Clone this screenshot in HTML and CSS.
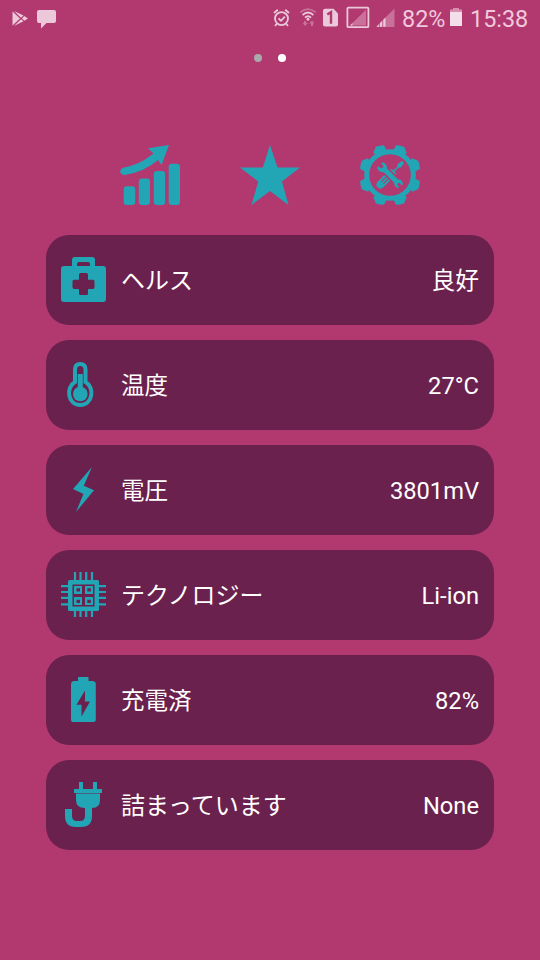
FILE: index.html
```html
<!DOCTYPE html>
<html lang="ja">
<head>
    <meta charset="UTF-8">
    <meta name="viewport" content="width=device-width, initial-scale=1.0">
    <title>Battery</title>
    <link rel="stylesheet" href="styles.css">
</head>
<body>
    <div class="status-bar">
        <svg class="play" width="18" height="36" viewBox="0 0 18 36">
            <path d="M0.5 11.5L8 18.5L0.5 25.5Z M2 11L11.5 15.5L9 17.8Z M2 26L11.5 21.2L9 19.2Z M12.3 16L16 18.5L12.3 20.8L10 18.5Z"/>
        </svg>
        <svg class="bubble" width="20" height="36" viewBox="0 0 20 36">
            <path d="M2 10H17Q19 10 19 12V21Q19 23 17 23H9.5L4 28.5V23H2Q0 23 0 21V12Q0 10 2 10Z"/>
        </svg>
        <svg class="alarm" width="18" height="36" viewBox="0 0 18 36">
            <g class="line">
                <circle cx="8.5" cy="18.6" r="6.5"/>
                <path d="M5.5 18.3L8 20.8L11.8 16.7M1 13L4.8 9.8M16 13L12.2 9.8M4 23.5L2 26M13 23.5L15 26"/>
            </g>
        </svg>
        <svg class="wifi" width="18" height="36" viewBox="0 0 18 36">
            <path class="line faint" d="M0.3 12.4Q8 5.8 15.7 12.4"/>
            <path class="line" d="M2.6 15Q8 10 13.4 15M5 17.6Q8 14.8 11 17.6"/>
            <circle cx="8" cy="19.3" r="1.4"/>
            <path class="faint" d="M4 21H6V23H8L5 26L2.5 23H4Z M11 26H13V23.5H14.5L12 20.5L9 23.5H11Z"/>
        </svg>
        <svg class="sim" width="16" height="36" viewBox="0 0 16 36">
            <path d="M2 8.8H10.5L15 13.5V24.5Q15 26.5 13 26.5H2Q0 26.5 0 24.5V10.8Q0 8.8 2 8.8Z"/>
            <path class="one" d="M4.3 14.5L8 12.2V23.7"/>
        </svg>
        <svg class="no-signal" width="24" height="36" viewBox="0 0 24 36">
            <rect class="line" x="1.4" y="7.6" width="21" height="19.6" rx="1"/>
            <path class="faint" d="M4 25.5L20 9.7V25.5Z"/>
            <path d="M4 25.5L6.5 23V25.5Z"/>
        </svg>
        <svg class="signal" width="20" height="36" viewBox="0 0 20 36">
            <path class="faint" d="M0 27L18.5 8.5V27Z"/>
            <path d="M0.5 26.7L3 24.3V26.7Z M4 26.7V23L6 21V26.7Z M7.3 26.7V19.8L9.5 17.6V26.7Z"/>
        </svg>
        <span class="percent">82%</span>
        <svg class="battery" width="12" height="36" viewBox="0 0 12 36">
            <path class="half" d="M0 9.5H3V8H9V9.5H12V13H0Z"/>
            <path class="full" d="M0 12H12V26H0Z"/>
        </svg>
        <span class="clock">15:38</span>
    </div>

    <div class="dots">
        <span class="dot"></span>
        <span class="dot active"></span>
    </div>

    <div class="tabs">
        <svg width="60" height="60" viewBox="0 0 60 60">
            <path d="M4 22.5Q20 19.5 33.5 8.5L28 3.2L49 0L41.5 20L38 15Q24 27 4.8 30Q1 30 0.2 27Q0 23.5 4 22.5Z"/>
            <rect x="3.7" y="41.3" width="11.5" height="18.7" rx="3"/>
            <rect x="18.8" y="33.5" width="11.2" height="26.5" rx="3"/>
            <rect x="33.8" y="26" width="11.3" height="34" rx="3"/>
            <rect x="48.7" y="18.8" width="11.3" height="41.2" rx="3"/>
        </svg>
        <svg width="60" height="60" viewBox="0 0 60 60">
            <path d="M30 0L37.5 22.5H60L42 36.5L48.5 60L30 46L11.5 60L18.2 36.5L0 22.5H22.8Z"/>
        </svg>
        <svg width="60" height="60" viewBox="0 0 60 60">
            <circle class="gear" cx="30" cy="30" r="23.3"/>
            <g id="teeth">
                <path d="M15.8 1.8Q20 0.1 24 0.2L26.7 5.5L24 9H15L13.2 8Z"/>
                <path d="M44.2 1.8Q40 0.1 36 0.2L33.3 5.5L36 9H45L46.8 8Z"/>
            </g>
            <use href="#teeth" transform="rotate(90 30 30)"/>
            <use href="#teeth" transform="rotate(180 30 30)"/>
            <use href="#teeth" transform="rotate(270 30 30)"/>
            <g transform="rotate(45 30 30)">
                <path d="M28.5 11.5H31.5L32.3 17L30.8 19V25.5H29.2V19L27.7 17Z M26.5 24.5H33.5V26H26.5Z M26 34H34V43.5Q34 47.5 30 47.5Q26 47.5 26 43.5Z"/>
                <path class="gap" d="M28.7 34V41M31.5 34V41"/>
            </g>
            <path class="wrench" d="M22.5 22.5L38 38"/>
            <path d="M22.2 17.2Q27.5 18.2 26.8 24.5L23.5 27.5Q18.5 27 17.2 23L18 21L21 23.5L24 21.5L21.2 18.8Z M34 38L38.5 34.5Q42.5 34.5 43 39.5L41.5 40.5L39.5 37.5L36.8 39.2L39.2 42L38.5 43Q34.5 42.5 34 38Z"/>
        </svg>
    </div>

    <div class="list">
        <div class="card">
            <svg class="icon" viewBox="0 0 45 45">
                <path fill-rule="evenodd" d="M3 9H11V3Q11 0 14 0H31Q34 0 34 3V9H42Q45 9 45 12V42Q45 45 42 45H3Q0 45 0 42V12Q0 9 3 9Z M16 9H29V7Q29 5 27 5H18Q16 5 16 7Z M19.5 16H25.5Q27 16 27 18V22.8H32Q33.5 22.8 33.5 24.5V30Q33.5 32 32 32H27V36.5Q27 38 25.5 38H19.5Q18 38 18 36.5V32H13Q11.5 32 11.5 30V24.5Q11.5 22.8 13 22.8H18V18Q18 16 19.5 16Z"/>
            </svg>
            <span class="label">ヘルス</span>
            <span class="value cjk">良好</span>
        </div>
        <div class="card">
            <svg class="icon" viewBox="0 0 45 45">
                <path class="tube" d="M14 20V7.5Q14 2 19.2 2Q24.5 2 24.5 7.5V20C34 25 32 43 19.2 43C6.5 43 4.5 25 14 20Z"/>
                <path class="mercury" d="M19.3 12V30"/>
                <circle cx="19.3" cy="32" r="7.3"/>
            </svg>
            <span class="label kanji">温度</span>
            <span class="value">27°C</span>
        </div>
        <div class="card">
            <svg class="icon" viewBox="0 0 45 45">
                <path d="M31 0L22.8 18.8L33 23.2L15 45L22.4 27L12 22Z"/>
            </svg>
            <span class="label kanji">電圧</span>
            <span class="value">3801mV</span>
        </div>
        <div class="card">
            <svg class="icon" viewBox="0 0 45 45">
                <path class="pins" d="M14 0V45M19.5 0V45M25.2 0V45M31 0V45M0 14.2H45M0 20H45M0 25.8H45M0 32.3H45"/>
                <rect x="7" y="8" width="31" height="31" rx="1.5"/>
                <rect class="core" x="11.5" y="12.5" width="22" height="22"/>
                <path fill-rule="evenodd" d="M13 14H21V22H13Z M15.5 16.2V19.5H19V16.2Z M24 14H32V22H24Z M26.3 16.2V19.5H29.8V16.2Z M13 25H21V33H13Z M15.5 27.7V31H19V27.7Z M24 25H32V33H24Z M26.3 27.7V31H29.8V27.7Z"/>
            </svg>
            <span class="label">テクノロジー</span>
            <span class="value">Li-ion</span>
        </div>
        <div class="card">
            <svg class="icon" viewBox="0 0 45 45">
                <path fill-rule="evenodd" d="M17 0H27.5V4H32Q34.8 4.5 34.8 7V43Q34.8 45 32.5 45H12Q10 45 10 43V7Q10 4.5 12.5 4H17Z M24 13.5L15.5 27.8H20.5V39.5L29 24.5H24Z"/>
            </svg>
            <span class="label kanji">充電済</span>
            <span class="value">82%</span>
        </div>
        <div class="card">
            <svg class="icon" viewBox="0 0 45 45">
                <path d="M18 0H22V7H32V0H36V7H41V11H39V18Q39 26 31 26V34Q31 45 20 45H15Q4 45 4 34V27H11V34Q11 39 16 39H19Q24 39 24 34V26Q15 26 15 18V11H13V7H18Z"/>
                <path class="seam" d="M14 11.5H40"/>
            </svg>
            <span class="label">詰まっています</span>
            <span class="value">None</span>
        </div>
    </div>
</body>
</html>
```
FILE: styles.css
```css
body {
    margin: 0;
    height: 960px;
    background: #b23870;
    color: white;
    font-family: Roboto, "Noto Sans CJK JP", sans-serif;
    overflow: hidden;
}
svg {
    display: block;
    flex-shrink: 0;
}
.status-bar {
    height: 36px;
    display: flex;
    padding-left: 12px;
    color: #f0c9dc;
    fill: #ebc9da;
    font-size: 23.4px;
    line-height: 38px;
    white-space: nowrap;
}
.line {
    fill: none;
    stroke: #ebc9da;
    stroke-width: 1.8;
}
.faint {
    opacity: 0.4;
}
.bubble {
    margin-left: 7px;
}
.alarm {
    margin-left: 216px;
}
.wifi {
    margin-left: 9px;
}
.sim {
    margin-left: 5px;
}
.one {
    fill: none;
    stroke: #b23870;
    stroke-width: 2.4;
}
.no-signal {
    margin-left: 7px;
}
.signal {
    margin-left: 6px;
}
.percent {
    width: 48px;
    margin-left: 6px;
}
.half {
    fill: #d68fb0;
}
.full {
    fill: #f3dfe9;
}
.clock {
    margin-left: 8px;
}
.dots {
    display: flex;
    justify-content: center;
    gap: 16px;
    padding-top: 18px;
}
.dot {
    width: 8px;
    height: 8px;
    border-radius: 50%;
    background: #aaa;
}
.dot.active {
    background: white;
}
.tabs {
    display: flex;
    justify-content: center;
    gap: 60px;
    margin-top: 83px;
    fill: #22a5b5;
}
.gear {
    fill: none;
    stroke: #22a5b5;
    stroke-width: 5;
}
.gap {
    stroke: #b23870;
    stroke-width: 1;
}
.wrench {
    stroke: #22a5b5;
    stroke-width: 5;
}
.list {
    display: flex;
    flex-direction: column;
    gap: 15px;
    margin: 30px 46px 0;
}
.card {
    height: 90px;
    box-sizing: border-box;
    padding: 0 15px 1px;
    display: flex;
    align-items: center;
    border-radius: 23px;
    background: #6b214d;
    font-size: 23.7px;
}
.icon {
    width: 45px;
    height: 45px;
    margin-bottom: 1px;
    fill: #22a5b5;
}
.label {
    margin-left: 15px;
    padding-bottom: 2px;
    font-family: "Noto Sans CJK JP", sans-serif;
    font-size: 24px;
}
.kanji {
    font-size: 23.5px;
}
.value {
    margin-left: auto;
    padding-top: 3px;
}
.value.cjk {
    padding: 0 0 2px;
}
.tube {
    fill: none;
    stroke: #22a5b5;
    stroke-width: 4;
}
.mercury {
    stroke: #22a5b5;
    stroke-width: 5;
}
.pins {
    stroke: #22a5b5;
    stroke-width: 2.2;
}
.core {
    fill: #6b214d;
}
.seam {
    stroke: #6b214d;
    stroke-width: 0.5;
}
```
